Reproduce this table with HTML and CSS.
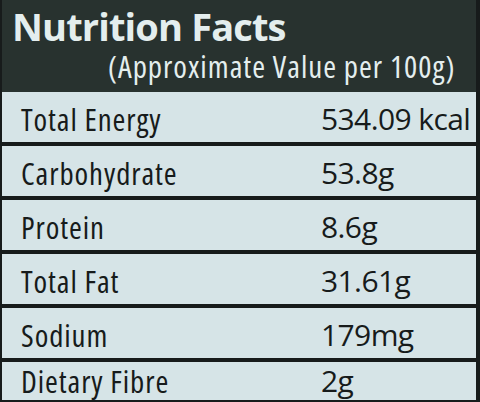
FILE: index.html
```html
<!DOCTYPE html>
<html lang="en">
<head>
  <meta charset="UTF-8" />
  <meta name="viewport" content="width=device-width, initial-scale=1.0"/>
  <title>Nutrition Facts</title>
  <link rel="stylesheet" href="styles.css">
</head>
<body>

  <div class="label">
    <header class="label-head">
      <h1>Nutrition Facts</h1>
      <p class="per">(Approximate Value per 100g)</p>
    </header>

    <div class="facts">
      <div class="row"><span class="name">Total Energy</span><span class="amount">534.09 kcal</span></div>
      <div class="row"><span class="name">Carbohydrate</span><span class="amount">53.8g</span></div>
      <div class="row"><span class="name">Protein</span><span class="amount">8.6g</span></div>
      <div class="row"><span class="name">Total Fat</span><span class="amount">31.61g</span></div>
      <div class="row"><span class="name">Sodium</span><span class="amount">179mg</span></div>
      <div class="row"><span class="name">Dietary Fibre</span><span class="amount">2g</span></div>
    </div>
  </div>

</body>
</html>
```

FILE: styles.css
```css
:root {
  --ink: #171b1b;
  --board: #28322f;
  --paper: #d6e4e7;
  --chalk: #e4eeee;
}

body {
  margin: 0;
  font-family: 'Open Sans', 'Noto Sans', sans-serif;
  background-color: var(--ink);
}

.label {
  width: 474px;
  height: 402px;
  border-left: 2px solid var(--ink);
  border-right: 4px solid var(--ink);
  overflow: hidden;
}

.label-head {
  height: 92px;
  background-color: var(--board);
  color: var(--chalk);
  box-sizing: border-box;
  padding: 0 0 0 10px;
}

.label-head h1 {
  margin: 0;
  font-size: 38px;
  line-height: 52px;
  font-weight: 700;
  font-stretch: 90%;
  letter-spacing: -0.85px;
}

.per {
  margin: 0 0 0 96px;
  font-size: 31px;
  line-height: 28px;
  font-stretch: 80%;
  letter-spacing: 1px;
  white-space: nowrap;
}

.facts {
  background-color: var(--paper);
}

.row {
  display: grid;
  grid-template-columns: 300px 1fr;
  align-items: center;
  height: 50px;
  padding: 0 0 0 19px;
  border-bottom: 4px solid var(--ink);
  color: var(--ink);
  font-weight: 500;
  line-height: 36px;
  white-space: nowrap;
}

.row:last-child {
  height: 38px;
  border-bottom-width: 2px;
}

.name {
  padding-top: 3px;
  font-size: 31px;
  font-stretch: 80%;
  letter-spacing: 0.9px;
}

.amount {
  padding-top: 3px;
  font-size: 30px;
  letter-spacing: -0.6px;
}

.row:last-child .name,
.row:last-child .amount {
  padding-top: 0;
}
```
